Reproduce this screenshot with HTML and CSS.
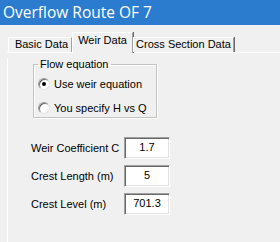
FILE: index.html
```html
<!DOCTYPE html>
<html lang="en">
<head>
    <meta charset="UTF-8">
    <title>Overflow Route OF 7</title>
    <link rel="stylesheet" href="styles.css">
</head>
<body>
    <div class="window">
        <div class="titlebar">Overflow Route OF 7</div>

        <div class="tabs">
            <div class="tab tab-basic">Basic Data</div>
            <div class="tab active">Weir Data</div>
            <div class="tab tab-cross">Cross Section Data</div>
        </div>

        <div class="panel">
            <fieldset class="group">
                <legend>Flow equation</legend>
                <label class="radio">
                    <span class="radio-dot checked"></span>
                    Use weir equation
                </label>
                <label class="radio">
                    <span class="radio-dot"></span>
                    You specify H vs Q
                </label>
            </fieldset>

            <div class="fields">
                <span class="field-label">Weir Coefficient C</span>
                <span class="field-box">1.7</span>
                <span class="field-label">Crest Length (m)</span>
                <span class="field-box">5</span>
                <span class="field-label">Crest Level (m)</span>
                <span class="field-box">701.3</span>
            </div>
        </div>
    </div>
</body>
</html>
```

FILE: styles.css
```css
body {
    margin: 0;
    background: #f0f0f0;
    font-family: "Liberation Sans", Arial, sans-serif;
    font-size: 11px;
    color: #000;
    overflow: hidden;
}
.window {
    width: 280px;
    height: 242px;
    overflow: hidden;
}
.titlebar {
    height: 25px;
    line-height: 25px;
    padding-left: 3px;
    background: #2b7ccf;
    color: #fff;
    font-family: "Open Sans", "Liberation Sans", sans-serif;
    font-size: 15.5px;
}

/* tab strip */
.tabs {
    display: flex;
    align-items: flex-end;
    height: 20px;
    margin-top: 7px;
    margin-left: 7px;
    padding-left: 1px;
    border-bottom: 1px solid #fff;
}
.tab {
    box-sizing: border-box;
    height: 15px;
    line-height: 13px;
    text-align: center;
    border-top: 1px solid #fff;
    border-left: 1px solid #fff;
    border-right: 1px solid #a0a0a0;
    box-shadow: 1px 0 0 #696969;
}
.tab-basic {
    width: 64px;
    padding-left: 3px;
}
.tab.active {
    width: 61px;
    height: 21px;
    line-height: 15px;
    margin-bottom: -1px;
    background: #f0f0f0;
}
.tab-cross {
    width: 101px;
}

/* tab page */
.panel {
    margin-left: 7px;
    height: 200px;
    border-left: 1px solid #fff;
}
.group {
    width: 118px;
    height: 56px;
    margin: 5px 0 0 25px;
    padding: 2px 0 0 4px;
    border: 1px solid #c4c4c4;
    box-shadow: 1px 1px 0 #fff, inset 1px 1px 0 #fff;
}
.group legend {
    padding: 0 2px;
    line-height: 12px;
}
.radio {
    display: flex;
    align-items: center;
    gap: 4px;
    height: 24px;
}
.radio-dot {
    box-sizing: border-box;
    width: 12px;
    height: 12px;
    border-radius: 50%;
    background: #fff;
    border: 1px solid;
    border-color: #a0a0a0 #e3e3e3 #e3e3e3 #a0a0a0;
    box-shadow: inset 1px 1px 0 #696969;
    display: flex;
    align-items: center;
    justify-content: center;
}
.radio-dot.checked::after {
    content: "";
    width: 4px;
    height: 4px;
    border-radius: 50%;
    background: #000;
}

/* value fields */
.fields {
    display: grid;
    grid-template-columns: 93px 46px;
    row-gap: 6px;
    align-items: center;
    margin: 19px 0 0 23px;
}
.field-box {
    box-sizing: border-box;
    height: 22px;
    line-height: 19px;
    text-align: center;
    background: #fff;
    border: 1px solid;
    border-color: #a0a0a0 #fff #fff #a0a0a0;
    box-shadow: inset 1px 1px 0 #696969, inset -1px -1px 0 #e3e3e3;
}
```
